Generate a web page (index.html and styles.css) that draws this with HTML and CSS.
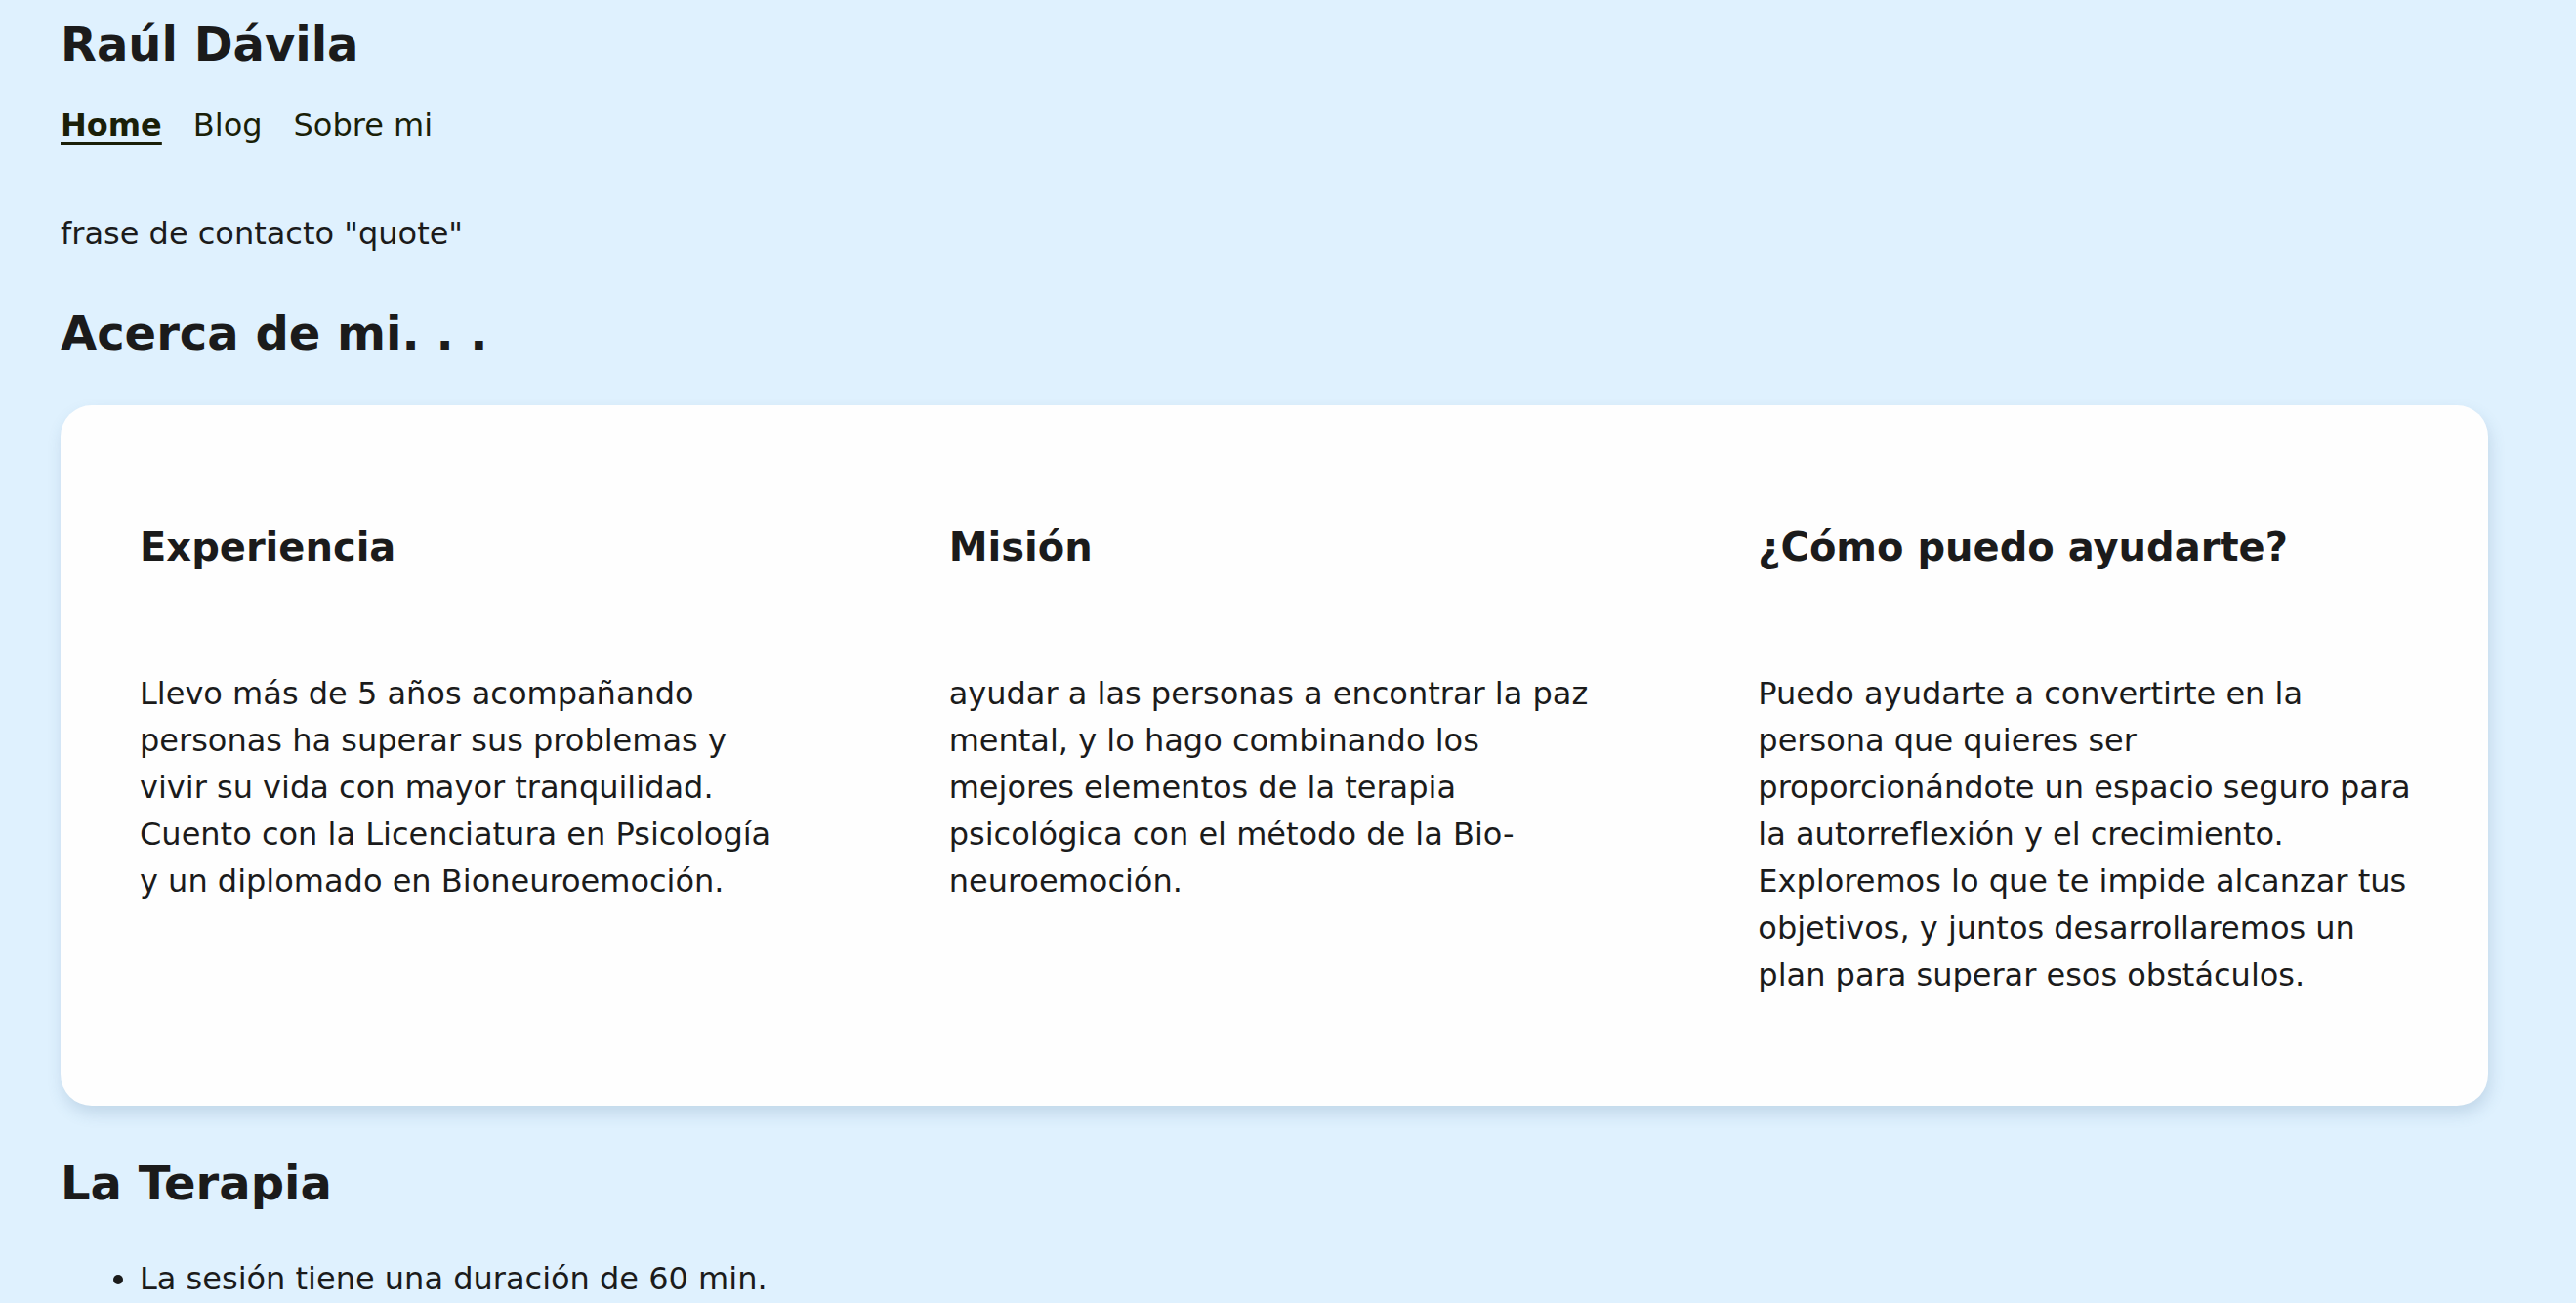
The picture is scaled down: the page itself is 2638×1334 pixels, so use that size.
FILE: index.html
```html
<!DOCTYPE html>
<html lang="es">
<head>
<meta charset="utf-8">
<title>Raúl Dávila</title>
<link rel="stylesheet" href="styles.css">
</head>
<body>
<header class="site-header">
  <h1 class="site-title">Raúl Dávila</h1>
  <nav class="nav">
    <a class="nav-link active" href="#">Home</a>
    <a class="nav-link" href="#">Blog</a>
    <a class="nav-link" href="#">Sobre mi</a>
  </nav>
</header>
<main>
  <p class="quote">frase de contacto "quote"</p>
  <h2 class="section-title">Acerca de mi. . .</h2>
  <section class="card">
    <div class="col">
      <h3 class="col-title">Experiencia</h3>
      <p class="col-text">Llevo más de 5 años acompañando personas ha superar sus problemas y vivir su vida con mayor tranquilidad. Cuento con la Licenciatura en Psicología y un diplomado en Bioneuroemoción.</p>
    </div>
    <div class="col">
      <h3 class="col-title">Misión</h3>
      <p class="col-text">ayudar a las personas a encontrar la paz mental, y lo hago combinando los mejores elementos de la terapia psicológica con el método de la Bio-neuroemoción.</p>
    </div>
    <div class="col">
      <h3 class="col-title">¿Cómo puedo ayudarte?</h3>
      <p class="col-text">Puedo ayudarte a convertirte en la persona que quieres ser proporcionándote un espacio seguro para la autorreflexión y el crecimiento. Exploremos lo que te impide alcanzar tus objetivos, y juntos desarrollaremos un plan para superar esos obstáculos.</p>
    </div>
  </section>
  <h2 class="section-title terapia">La Terapia</h2>
  <ul class="list">
    <li>La sesión tiene una duración de 60 min.</li>
  </ul>
</main>
</body>
</html>
```
FILE: styles.css
```css
html, body {
  margin: 0;
  padding: 0;
}
body {
  background: #dff1fe;
  color: #1b1b1b;
  font-family: "DejaVu Sans", Verdana, sans-serif;
  font-size: 32px;
  line-height: 48px;
  padding: 17px 90px 0 62px;
  overflow: hidden;
  height: 1317px;
}
.site-title {
  margin: 0;
  font-size: 48px;
  line-height: 56px;
  font-weight: bold;
}
.nav {
  display: flex;
  gap: 32px;
  margin-top: 31px;
}
.nav-link {
  color: #1a1f08;
  text-decoration: none;
}
.nav-link.active {
  font-weight: bold;
  text-decoration: underline;
  text-decoration-thickness: 3px;
  text-underline-offset: 6px;
}
main {
  display: block;
}
.quote {
  margin: 63px 0 0;
}
.section-title {
  margin: 50px 0 0;
  font-size: 48px;
  line-height: 56px;
  font-weight: bold;
}
.card {
  margin-top: 46px;
  background: #fefefe;
  border-radius: 32px;
  box-shadow: 2px 8px 16px rgba(60, 100, 140, 0.18);
  display: grid;
  grid-template-columns: 1fr 1fr 1fr;
  padding: 121px 0 110px;
}
.col {
  padding: 0 75px 0 81px;
}
.col-title {
  margin: 0;
  font-size: 40px;
  line-height: 48px;
  font-weight: bold;
}
.col-text {
  margin: 102px 0 0;
}
.terapia {
  margin-top: 51px;
}
.list {
  margin: 46px 0 0;
  padding-left: 81px;
}
```
